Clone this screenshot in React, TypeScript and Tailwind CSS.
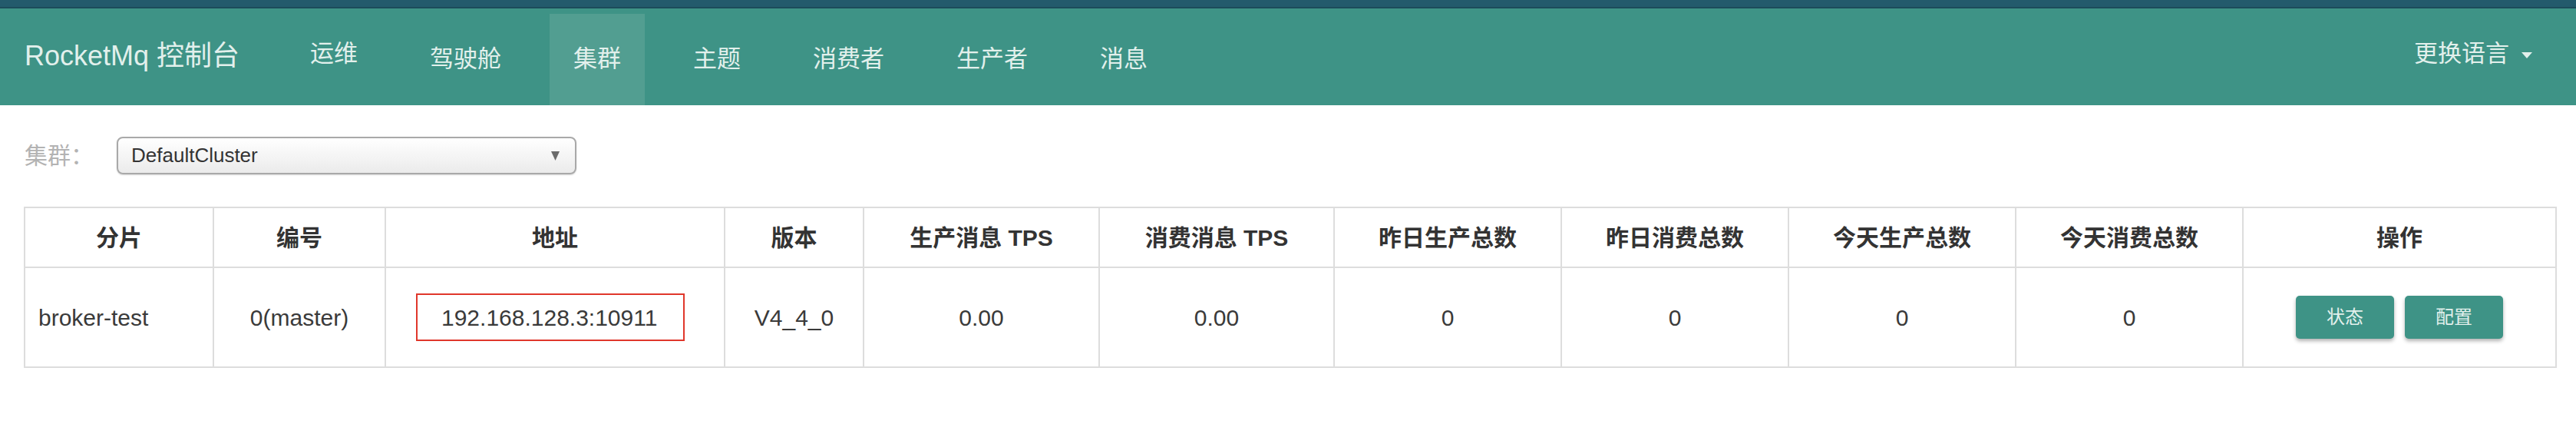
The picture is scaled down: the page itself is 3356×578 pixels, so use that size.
import React from "react";

interface Column {
  title: string;
  width: string;
}

// column widths measured from the reference
const columns: Column[] = [
  { title: "分片", width: "w-[246px]" },
  { title: "编号", width: "w-[224px]" },
  { title: "地址", width: "w-[442px]" },
  { title: "版本", width: "w-[181px]" },
  { title: "生产消息 TPS", width: "w-[307px]" },
  { title: "消费消息 TPS", width: "w-[306px]" },
  { title: "昨日生产总数", width: "w-[296px]" },
  { title: "昨日消费总数", width: "w-[296px]" },
  { title: "今天生产总数", width: "w-[296px]" },
  { title: "今天消费总数", width: "w-[296px]" },
  { title: "操作", width: "w-[408px]" },
];

const navItems = ["运维", "驾驶舱", "集群", "主题", "消费者", "生产者", "消息"];

export default function App() {
  return (
    <div className="min-h-[578px] bg-white font-['Liberation_Sans','Noto_Sans_CJK_SC',sans-serif]">
      {/* top strip */}
      <div className="h-[11px] bg-[#235a6c] border-b-2 border-[#1c4b5b]" />

      {/* Navbar */}
      <nav className="h-[126px] bg-[#3e9386] flex items-stretch pl-[32px] pr-[57px] text-[#e2f0ec]">
        <div className="w-[341px] flex items-center text-[36px] pb-[3px]">RocketMq 控制台</div>
        <ul className="flex items-stretch gap-[32px] pt-[7px]">
          {navItems.map((item, i) => (
            <li
              key={item}
              className={`px-[31px] flex items-center text-[31px] ${
                item === "集群" ? "bg-[#529e91]" : ""
              } ${i === 0 ? "pb-[15px]" : ""}`}
            >
              {item}
            </li>
          ))}
        </ul>
        <div className="ml-auto flex items-center gap-[16px] text-[31px] pb-[8px]">
          <span>更换语言</span>
          <svg width="14" height="8" viewBox="0 0 14 8" className="mt-[4px]">
            <path d="M0 0 L14 0 L7 8 Z" fill="#e2f0ec" />
          </svg>
        </div>
      </nav>

      {/* Cluster selector */}
      <div className="pt-[41px] flex items-center">
        <label className="w-[152px] pl-[32px] text-[30px] text-[#b3b3b3]">集群：</label>
        <div className="w-[599px] h-[49px] rounded-[8px] border-2 border-[#a9a9a9] bg-gradient-to-b from-white to-[#ebebeb] shadow-[0_1px_2px_rgba(0,0,0,0.15)] flex items-center pl-[17px] pr-[20px]">
          <span className="text-[26px] text-[#333]">DefaultCluster</span>
          <svg width="11" height="12" viewBox="0 0 11 12" className="ml-auto">
            <path d="M0 0 L11 0 L5.5 12 Z" fill="#6b6b6b" />
          </svg>
        </div>
      </div>

      {/* Broker table */}
      <table className="mt-[42px] ml-[31px] w-[3298px] table-fixed border-collapse border-2 border-[#dddddd]">
        <colgroup>
          {columns.map((c) => (
            <col key={c.title} className={c.width} />
          ))}
        </colgroup>
        <thead>
          <tr className="h-[78px]">
            {columns.map((c) => (
              <th
                key={c.title}
                className="border-2 border-[#dddddd] text-[30px] font-bold text-[#333] text-center align-middle"
              >
                {c.title}
              </th>
            ))}
          </tr>
        </thead>
        <tbody>
          <tr className="h-[130px] text-[30px] text-[#3a3a3a]">
            <td className="border-2 border-[#dddddd] pl-[17px] text-left">broker-test</td>
            <td className="border-2 border-[#dddddd] text-center">0(master)</td>
            <td className="border-2 border-[#dddddd] text-center">
              <span className="inline-flex items-center w-[350px] h-[62px] mr-[12px] border-2 border-[#e0372b] pl-[31px]">
                192.168.128.3:10911
              </span>
            </td>
            <td className="border-2 border-[#dddddd] text-center">V4_4_0</td>
            <td className="border-2 border-[#dddddd] text-center">0.00</td>
            <td className="border-2 border-[#dddddd] text-center">0.00</td>
            <td className="border-2 border-[#dddddd] text-center">0</td>
            <td className="border-2 border-[#dddddd] text-center">0</td>
            <td className="border-2 border-[#dddddd] text-center">0</td>
            <td className="border-2 border-[#dddddd] text-center">0</td>
            <td className="border-2 border-[#dddddd]">
              <div className="flex justify-center gap-[14px]">
                <button className="w-[128px] h-[56px] rounded-[5px] bg-[#3e9386] text-[24px] text-[#e2f0ec] shadow-[0_3px_5px_rgba(0,0,0,0.3)]">
                  状态
                </button>
                <button className="w-[128px] h-[56px] rounded-[5px] bg-[#3e9386] text-[24px] text-[#e2f0ec] shadow-[0_3px_5px_rgba(0,0,0,0.3)]">
                  配置
                </button>
              </div>
            </td>
          </tr>
        </tbody>
      </table>
    </div>
  );
}
